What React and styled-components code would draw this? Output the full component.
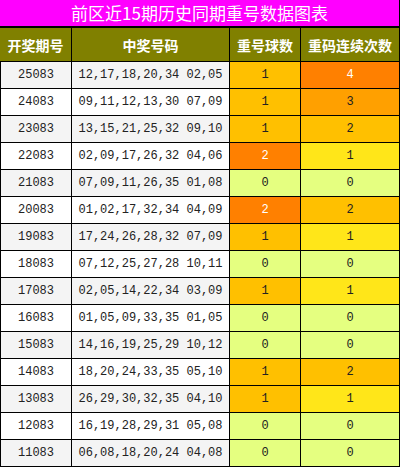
import React from "react";
import styled, {createGlobalStyle} from "styled-components";

const GlobalStyle = createGlobalStyle`
  html, body {
    margin: 0;
    padding: 0;
    background: #fff;
  }
`

const rows = [
  ["25083", "12,17,18,20,34 02,05", 1, 4],
  ["24083", "09,11,12,13,30 07,09", 1, 3],
  ["23083", "13,15,21,25,32 09,10", 1, 2],
  ["22083", "02,09,17,26,32 04,06", 2, 1],
  ["21083", "07,09,11,26,35 01,08", 0, 0],
  ["20083", "01,02,17,32,34 04,09", 2, 2],
  ["19083", "17,24,26,28,32 07,09", 1, 1],
  ["18083", "07,12,25,27,28 10,11", 0, 0],
  ["17083", "02,05,14,22,34 03,09", 1, 1],
  ["16083", "01,05,09,33,35 01,05", 0, 0],
  ["15083", "14,16,19,25,29 10,12", 0, 0],
  ["14083", "18,20,24,33,35 05,10", 1, 2],
  ["13083", "26,29,30,32,35 04,10", 1, 1],
  ["12083", "16,19,28,29,31 05,08", 0, 0],
  ["11083", "06,08,18,20,24 04,08", 0, 0],
];

// 重号球数 colours
const ballColors = {0: "#e5ff80", 1: "#ffc000", 2: "#ff8000"};
// 重码连续次数 colours
const streakColors = {0: "#e5ff80", 1: "#ffe619", 2: "#ffc000", 3: "#ffa000", 4: "#ff8000"};

const Wrapper = styled.div`
  width: 400px;
  font-family: "Liberation Mono", monospace;
`

const Title = styled.div`
  height: 26px;
  background: #ff00ff;
  border-right: 1px solid #000;
  border-bottom: 2px solid #000;
  color: #fff;
  font-family: "Noto Sans CJK SC", sans-serif;
  font-size: 17px;
  line-height: 26px;
  text-align: center;
`

const HeaderRow = styled.div`
  display: grid;
  grid-template-columns: 72px 158px 71px 99px;
  height: 34px;
  background: #808000;
`

const HeaderCell = styled.div`
  display: flex;
  align-items: center;
  justify-content: center;
  border-right: 1px solid #000;
  border-bottom: 1px solid #000;
  color: #fff;
  font-family: "Noto Sans CJK SC", sans-serif;
  font-size: 14px;
  font-weight: 700;
`

const Row = styled.div`
  display: grid;
  grid-template-columns: 71px 158px 71px 99px;
  height: 27px;
  border-left: 1px solid #000;
  background: ${p => p.$odd ? "#f4f4f4" : "#fff"};
`

const Cell = styled.div`
  display: flex;
  align-items: center;
  justify-content: center;
  border-right: 1px solid #000;
  border-bottom: 1px solid #000;
  font-size: 12px;
  color: ${p => p.$light ? "#fff" : "#222"};
  background: ${p => p.$bg || "transparent"};
`

const App = () => {
  return (
    <Wrapper>
      <GlobalStyle />
      <Title>前区近15期历史同期重号数据图表</Title>
      <HeaderRow>
        <HeaderCell>开奖期号</HeaderCell>
        <HeaderCell>中奖号码</HeaderCell>
        <HeaderCell>重号球数</HeaderCell>
        <HeaderCell>重码连续次数</HeaderCell>
      </HeaderRow>
      {rows.map(([issue, nums, balls, streak], i) => (
        <Row key={issue} $odd={i % 2 === 0}>
          <Cell>{issue}</Cell>
          <Cell>{nums}</Cell>
          <Cell $bg={ballColors[balls]} $light={balls === 2}>{balls}</Cell>
          <Cell $bg={streakColors[streak]} $light={streak === 4}>{streak}</Cell>
        </Row>
      ))}
    </Wrapper>
  );
};

export default App;
